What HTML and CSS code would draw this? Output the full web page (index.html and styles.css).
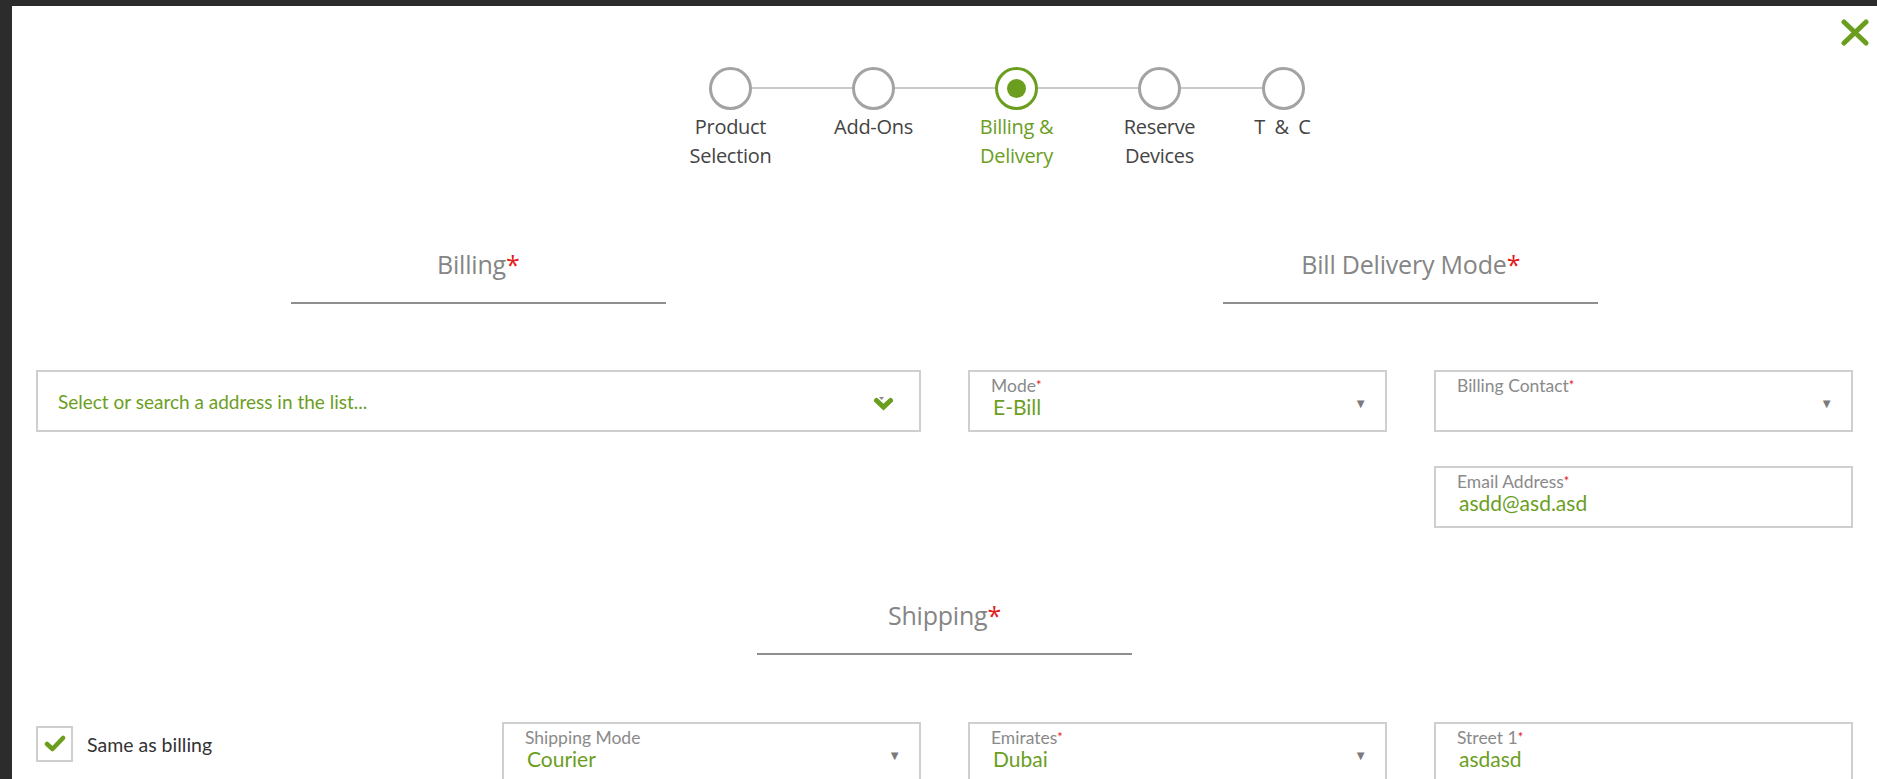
FILE: index.html
```html
<!DOCTYPE html>
<html lang="en">
<head>
<meta charset="utf-8">
<title>Billing &amp; Delivery</title>
<link rel="stylesheet" href="styles.css">
</head>
<body>
<div class="modal">
  <button class="close" aria-label="Close">
    <svg width="28" height="27" viewBox="0 0 28 27"><path d="M3 3 L25 24 M25 3 L3 24" stroke="#6b9e1f" stroke-width="5" stroke-linecap="round" fill="none"/></svg>
  </button>

  <ol class="stepper">
    <li class="step"><span class="dot"></span><span class="step-label">Product<br>Selection</span></li>
    <li class="step"><span class="dot"></span><span class="step-label">Add-Ons</span></li>
    <li class="step active"><span class="dot"></span><span class="step-label">Billing &amp;<br>Delivery</span></li>
    <li class="step"><span class="dot"></span><span class="step-label">Reserve<br>Devices</span></li>
    <li class="step last"><span class="dot"></span><span class="step-label">T &amp; C</span></li>
  </ol>

  <div class="heads">
    <div class="head"><h2>Billing<span class="req">*</span></h2><span class="rule"></span></div>
    <div class="head"><h2>Bill Delivery Mode<span class="req">*</span></h2><span class="rule"></span></div>
  </div>

  <div class="grid row1">
    <div class="field address">
      <span class="placeholder">Select or search a address in the list...</span>
      <svg class="chev" width="22" height="18" viewBox="0 0 22 18"><path d="M6 2 L11 2 L8.5 5 Z" fill="#8a8a8a"/><path d="M3.5 5.5 L10.5 12 L17.5 5.5" stroke="#6b9e1f" stroke-width="5" fill="none" stroke-linejoin="miter" stroke-linecap="round"/></svg>
    </div>
    <div class="field select mode">
      <div class="fv"><span class="lbl">Mode<span class="req">*</span></span><span class="val">E-Bill</span></div>
      <span class="tri">&#9660;</span>
    </div>
    <div class="field select contact">
      <div class="fv"><span class="lbl">Billing Contact<span class="req">*</span></span><span class="val"></span></div>
      <span class="tri">&#9660;</span>
    </div>
    <div class="field email">
      <div class="fv"><span class="lbl">Email Address<span class="req">*</span></span><span class="val">asdd@asd.asd</span></div>
    </div>
  </div>

  <div class="heads single">
    <div class="head"><h2>Shipping<span class="req">*</span></h2><span class="rule"></span></div>
  </div>

  <div class="grid row2">
    <label class="check">
      <span class="box"><svg width="22" height="18" viewBox="0 0 22 18"><path d="M3 9 L8.5 14 L19 3" stroke="#6b9e1f" stroke-width="4.5" fill="none" stroke-linecap="round" stroke-linejoin="round"/></svg></span>
      <span class="check-text">Same as billing</span>
    </label>
    <div class="field select">
      <div class="fv"><span class="lbl">Shipping Mode</span><span class="val">Courier</span></div>
      <span class="tri">&#9660;</span>
    </div>
    <div class="field select">
      <div class="fv"><span class="lbl">Emirates<span class="req">*</span></span><span class="val">Dubai</span></div>
      <span class="tri">&#9660;</span>
    </div>
    <div class="field">
      <div class="fv"><span class="lbl">Street 1<span class="req">*</span></span><span class="val">asdasd</span></div>
    </div>
  </div>
</div>
</body>
</html>
```

FILE: styles.css
```css
html, body {
  margin: 0;
  padding: 0;
  height: 100%;
  overflow: hidden;
}
body {
  background: #2c2c2c;
  font-family: "Lato", "Open Sans", sans-serif;
}
.modal {
  position: relative;
  margin: 6px 0 0 12px;
  background: #fff;
  min-height: 900px;
  padding-top: 61px;
  box-sizing: border-box;
}
.close {
  position: absolute;
  top: 13px;
  right: 8px;
  border: 0;
  background: none;
  padding: 0;
  width: 28px;
  height: 27px;
}
.close svg { display: block; }

/* Stepper */
.stepper {
  list-style: none;
  margin: 0;
  padding: 0 0 0 106px;
  display: flex;
  justify-content: center;
  position: relative;
}
.stepper::before {
  content: "";
  position: absolute;
  top: 20px;
  left: calc(50% + 53px - 338.5px + 71.5px);
  width: 552px;
  height: 2px;
  background: #c9c9c9;
}
.step {
  width: 143px;
  display: flex;
  flex-direction: column;
  align-items: center;
  position: relative;
  z-index: 1;
}
.step.last { width: 105px; }
.dot {
  width: 43px;
  height: 43px;
  box-sizing: border-box;
  border: 3px solid #a3a3a3;
  border-radius: 50%;
  background: #fff;
  display: flex;
  align-items: center;
  justify-content: center;
}
.step.active .dot { border-color: #6b9e1f; }
.step.active .dot::after {
  content: "";
  width: 19px;
  height: 19px;
  border-radius: 50%;
  background: #6b9e1f;
}
.step-label {
  margin-top: 2px;
  font-family: "Open Sans", sans-serif;
  font-size: 20px;
  line-height: 29px;
  color: #444;
  text-align: center;
  letter-spacing: -0.3px;
}
.step.active .step-label { color: #6b9e1f; }
.step.last .step-label { letter-spacing: 2px; }

/* Section heads */
.heads {
  display: grid;
  grid-template-columns: 1fr 1fr;
  margin-top: 78px;
}
.heads.single {
  grid-template-columns: 1fr;
  margin-top: 71px;
}
.head {
  display: flex;
  flex-direction: column;
  align-items: center;
}
.head h2 {
  margin: 0;
  font-family: "Open Sans", sans-serif;
  font-weight: 400;
  font-size: 25px;
  line-height: 32px;
  color: #858585;
  letter-spacing: -0.2px;
}
.req { color: #e61a1a; }
.rule {
  margin-top: 22px;
  width: 375px;
  height: 2px;
  background: #8e8e8e;
}

/* Grid */
.grid {
  display: grid;
  grid-template-columns: repeat(4, 1fr);
  column-gap: 47px;
  row-gap: 34px;
  padding: 0 24px;
}
.row1 { margin-top: 66px; }
.row2 { margin-top: 67px; }

.field {
  position: relative;
  height: 62px;
  box-sizing: border-box;
  border: 2px solid #cfcfcf;
  padding: 4px 18px 0 21px;
  display: flex;
  align-items: flex-start;
  justify-content: space-between;
}
.address {
  grid-column: 1 / span 2;
  align-items: center;
  padding: 0 24px 0 20px;
}
.mode { grid-column: 3; }
.contact { grid-column: 4; }
.email { grid-column: 4; }
.placeholder {
  color: #6b9e1f;
  font-size: 19px;
}
.chev { margin-top: 5px; }
.fv {
  display: flex;
  flex-direction: column;
}
.lbl {
  font-size: 17.5px;
  line-height: 19px;
  color: #8a8a8a;
}
.lbl .req { font-size: 13px; vertical-align: top; }
.val {
  font-size: 21px;
  line-height: 23px;
  color: #6b9e1f;
  padding-left: 2px;
  min-height: 23px;
}
.tri {
  align-self: center;
  font-size: 13px;
  color: #7a7a7a;
}

/* Checkbox */
.check {
  display: flex;
  align-items: center;
  gap: 14px;
  padding-top: 4px;
  align-self: start;
}
.box {
  width: 37px;
  height: 36px;
  box-sizing: border-box;
  border: 2px solid #cfcfcf;
  display: flex;
  align-items: center;
  justify-content: center;
}
.box svg { display: block; }
.check-text {
  font-size: 19.5px;
  color: #333;
}
```
